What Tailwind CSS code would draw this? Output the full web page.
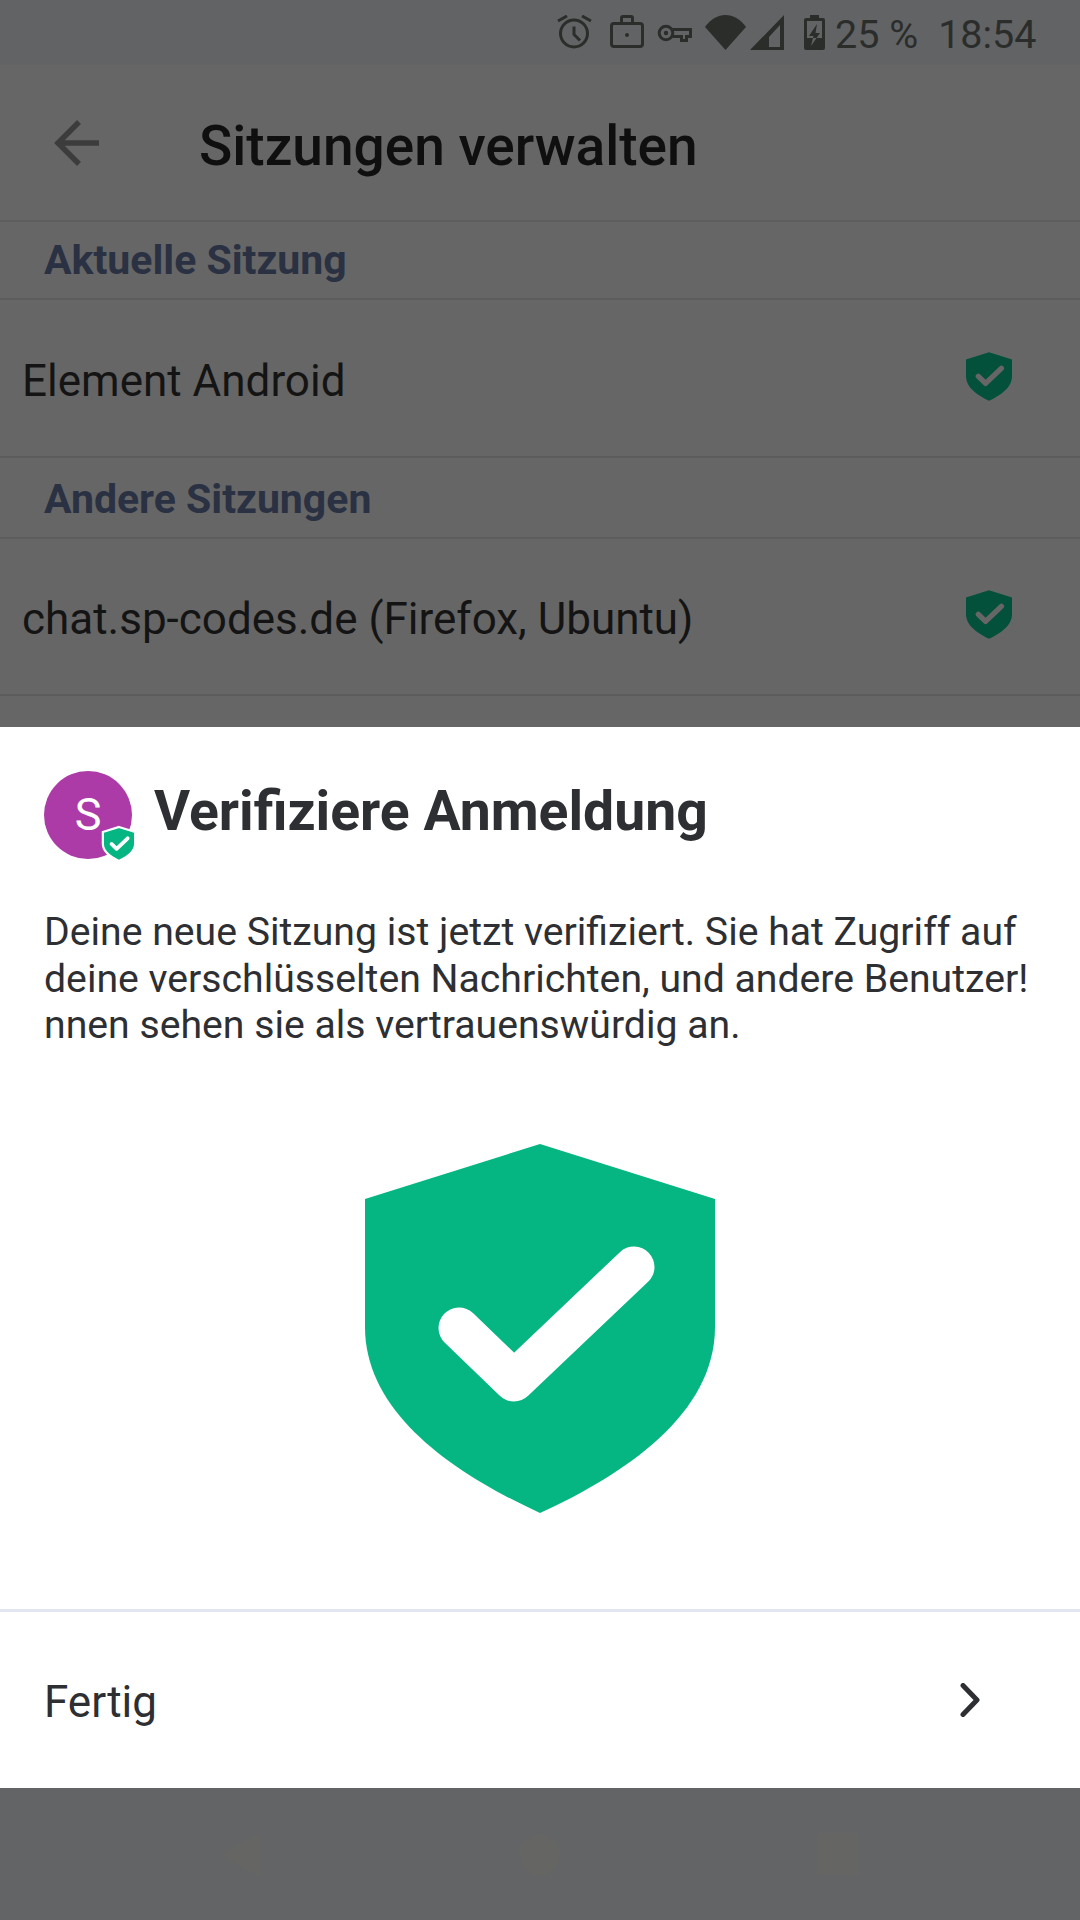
<!DOCTYPE html>
<html lang="de">
<head>
    <meta charset="UTF-8">
    <meta name="viewport" content="width=device-width, initial-scale=1.0">
    <title>Sitzungen verwalten</title>
    <script src="https://cdn.jsdelivr.net/npm/@tailwindcss/browser@4"></script>
</head>
<body class="w-[1080px] h-[1920px] overflow-hidden bg-[#666666] font-['Roboto',sans-serif]">
    <!-- status bar -->
    <div class="h-[65px] bg-[#626365] flex items-center text-[#2b2d2b]">
        <svg class="ml-[557px] w-[35px] h-[35px]" viewBox="0 0 35 35" fill="none" stroke="#2b2d2b" stroke-width="3">
            <circle cx="17" cy="18.5" r="13.5"/>
            <path d="M17 11.5v8l6 6M1 6l9-5M34 6l-9-5"/>
        </svg>
        <svg class="ml-[18px] mb-[2px] w-[34px] h-[33px]" viewBox="0 0 34 33" fill="none" stroke="#2b2d2b" stroke-width="3">
            <rect x="1.5" y="8.5" width="31" height="23" rx="2.5"/>
            <path d="M11.5 8V3a1.5 1.5 0 0 1 1.5-1.5h8a1.5 1.5 0 0 1 1.5 1.5V8"/>
            <circle cx="17" cy="20" r="2" fill="#2b2d2b" stroke="none"/>
        </svg>
        <svg class="ml-[13px] w-[35px] h-[18px]" viewBox="0 0 35 18" fill="none" stroke="#2b2d2b" stroke-width="3">
            <circle cx="9" cy="9" r="6.8"/>
            <circle cx="9" cy="9" r="2.2" fill="#2b2d2b" stroke="none"/>
            <path d="M15 5.5h18.5v7h-4v4h-5v-4h-9"/>
        </svg>
        <svg class="ml-[13px] w-[41px] h-[35px]" viewBox="0 0 41 35"><path d="M0 12C11 -4 30 -4 41 12L20.5 35Z" fill="#2b2d2b"/></svg>
        <svg class="ml-[4px] w-[34px] h-[35px]" viewBox="0 0 34 35">
            <path d="M34 0V35H0ZM30 10L19 22V32H30Z" fill="#2b2d2b" fill-rule="evenodd"/>
        </svg>
        <svg class="ml-[20px] w-[21px] h-[35px]" viewBox="0 0 21 35">
            <path d="M6 0h9v3h4a2 2 0 0 1 2 2v28a2 2 0 0 1-2 2H2a2 2 0 0 1-2-2V5a2 2 0 0 1 2-2h4ZM3 6V32H18V6Z" fill="#2b2d2b" fill-rule="evenodd"/>
            <path d="M13 9L5 21H9.5L7 31L16 18H11.5L13 9ZM3 23V32H18V23Z" fill="#2b2d2b" fill-rule="evenodd"/>
        </svg>
        <span class="ml-[10px] pt-[4px] text-[39.5px] leading-none">25 %</span>
        <span class="ml-[20px] pt-[4px] text-[39.5px] leading-none">18:54</span>
    </div>

    <!-- toolbar -->
    <div class="h-[157px] flex items-center border-b-[2px] border-[#5e5e5e]">
        <svg class="ml-[54px] w-[46px] h-[46px]" viewBox="0 0 46 46" fill="none" stroke="#3c3c3c" stroke-width="5.5">
            <path d="M45 23H5M25 2L4 23l21 21"/>
        </svg>
        <span class="ml-[99px] pt-[8px] text-[55px] font-medium text-[#0f0f0f]">Sitzungen verwalten</span>
    </div>

    <!-- sessions list behind the sheet -->
    <div class="h-[78px] flex items-center border-b-[2px] border-[#5d5d5d] pl-[44px] pt-[2px] font-bold text-[41px] text-[#2a3142]">Aktuelle Sitzung</div>
    <div class="h-[158px] flex items-center justify-between border-b-[2px] border-[#5d5d5d] pl-[22px] pr-[68px] text-[44px] text-[#141414]">
        <span class="pt-[5px]">Element Android</span>
        <svg class="w-[46px] h-[49px] mb-[4px]" viewBox="0 0 350 369">
            <path d="M175 0L350 55V183C350 270 260 330 175 369C90 330 0 270 0 183V55Z" fill="#03503b"/>
            <path d="M94 184L149 237L269 123" fill="none" stroke="#666666" stroke-width="41" stroke-linecap="round" stroke-linejoin="round"/>
        </svg>
    </div>
    <div class="h-[81px] flex items-center border-b-[2px] border-[#5d5d5d] pl-[44px] pt-[4px] font-bold text-[41px] text-[#2a3142]">Andere Sitzungen</div>
    <div class="h-[157px] flex items-center justify-between border-b-[2px] border-[#5d5d5d] pl-[22px] pr-[68px] text-[44px] text-[#141414]">
        <span class="pt-[4px]">chat.sp-codes.de (Firefox, Ubuntu)</span>
        <svg class="w-[46px] h-[49px] mb-[4px]" viewBox="0 0 350 369">
            <path d="M175 0L350 55V183C350 270 260 330 175 369C90 330 0 270 0 183V55Z" fill="#03503b"/>
            <path d="M94 184L149 237L269 123" fill="none" stroke="#666666" stroke-width="41" stroke-linecap="round" stroke-linejoin="round"/>
        </svg>
    </div>
    <div class="h-[31px]"></div>

    <!-- bottom sheet -->
    <div class="h-[1061px] bg-white flex flex-col">
        <div class="flex items-center pl-[44px] pt-[44px]">
            <div class="relative w-[88px] h-[88px] rounded-full bg-[#ac3ba8] flex items-center justify-center text-white text-[45px]">
                S
                <svg class="absolute left-[57px] top-[54px] w-[36px] h-[38px]" viewBox="-20 -20 390 409">
                    <path d="M175 0L350 55V183C350 270 260 330 175 369C90 330 0 270 0 183V55Z" fill="#05b582" stroke="white" stroke-width="24"/>
                    <path d="M94 184L149 237L269 123" fill="none" stroke="white" stroke-width="41" stroke-linecap="round" stroke-linejoin="round"/>
                </svg>
            </div>
            <span class="ml-[22px] mb-[7px] font-bold text-[55.3px] leading-none text-[#2e2f32]">Verifiziere Anmeldung</span>
        </div>
        <p class="mt-[50px] px-[44px] text-[39.2px] leading-[46.5px] text-[#2e2f32] whitespace-nowrap">Deine neue Sitzung ist jetzt verifiziert. Sie hat Zugriff auf<br>deine verschlüsselten Nachrichten, und andere Benutzer!<br>nnen sehen sie als vertrauenswürdig an.</p>
        <div class="flex justify-center mt-[95px]">
            <svg class="w-[350px] h-[369px]" viewBox="0 0 350 369">
                <path d="M175 0L350 55V183C350 270 260 330 175 369C90 330 0 270 0 183V55Z" fill="#05b582"/>
                <path d="M94 184L149 237L269 123" fill="none" stroke="white" stroke-width="41" stroke-linecap="round" stroke-linejoin="round"/>
            </svg>
        </div>
        <div class="mt-[96px] flex-1 border-t-[3px] border-[#e3e5f0] flex items-center justify-between pl-[44px] pr-[100px] text-[44px] text-[#2e2f32]">
            <span class="pt-[4px]">Fertig</span>
            <svg class="w-[20px] h-[34px]" viewBox="0 0 20 34" fill="none" stroke="#2e2f32" stroke-width="5" stroke-linecap="round" stroke-linejoin="round">
                <path d="M3 2.5L17 17L3 31.5"/>
            </svg>
        </div>
    </div>

    <!-- nav bar -->
    <div class="h-[132px] bg-[#636466] relative">
        <svg class="absolute left-[220px] top-[45px] w-[40px] h-[44px]" viewBox="0 0 40 44"><path d="M40 0V44L0 22Z" fill="#656664"/></svg>
        <div class="absolute left-[520px] top-[47px] w-[40px] h-[40px] rounded-full bg-[#656664]"></div>
        <div class="absolute left-[817px] top-[45px] w-[41px] h-[42px] bg-[#656664]"></div>
    </div>
</body>
</html>
